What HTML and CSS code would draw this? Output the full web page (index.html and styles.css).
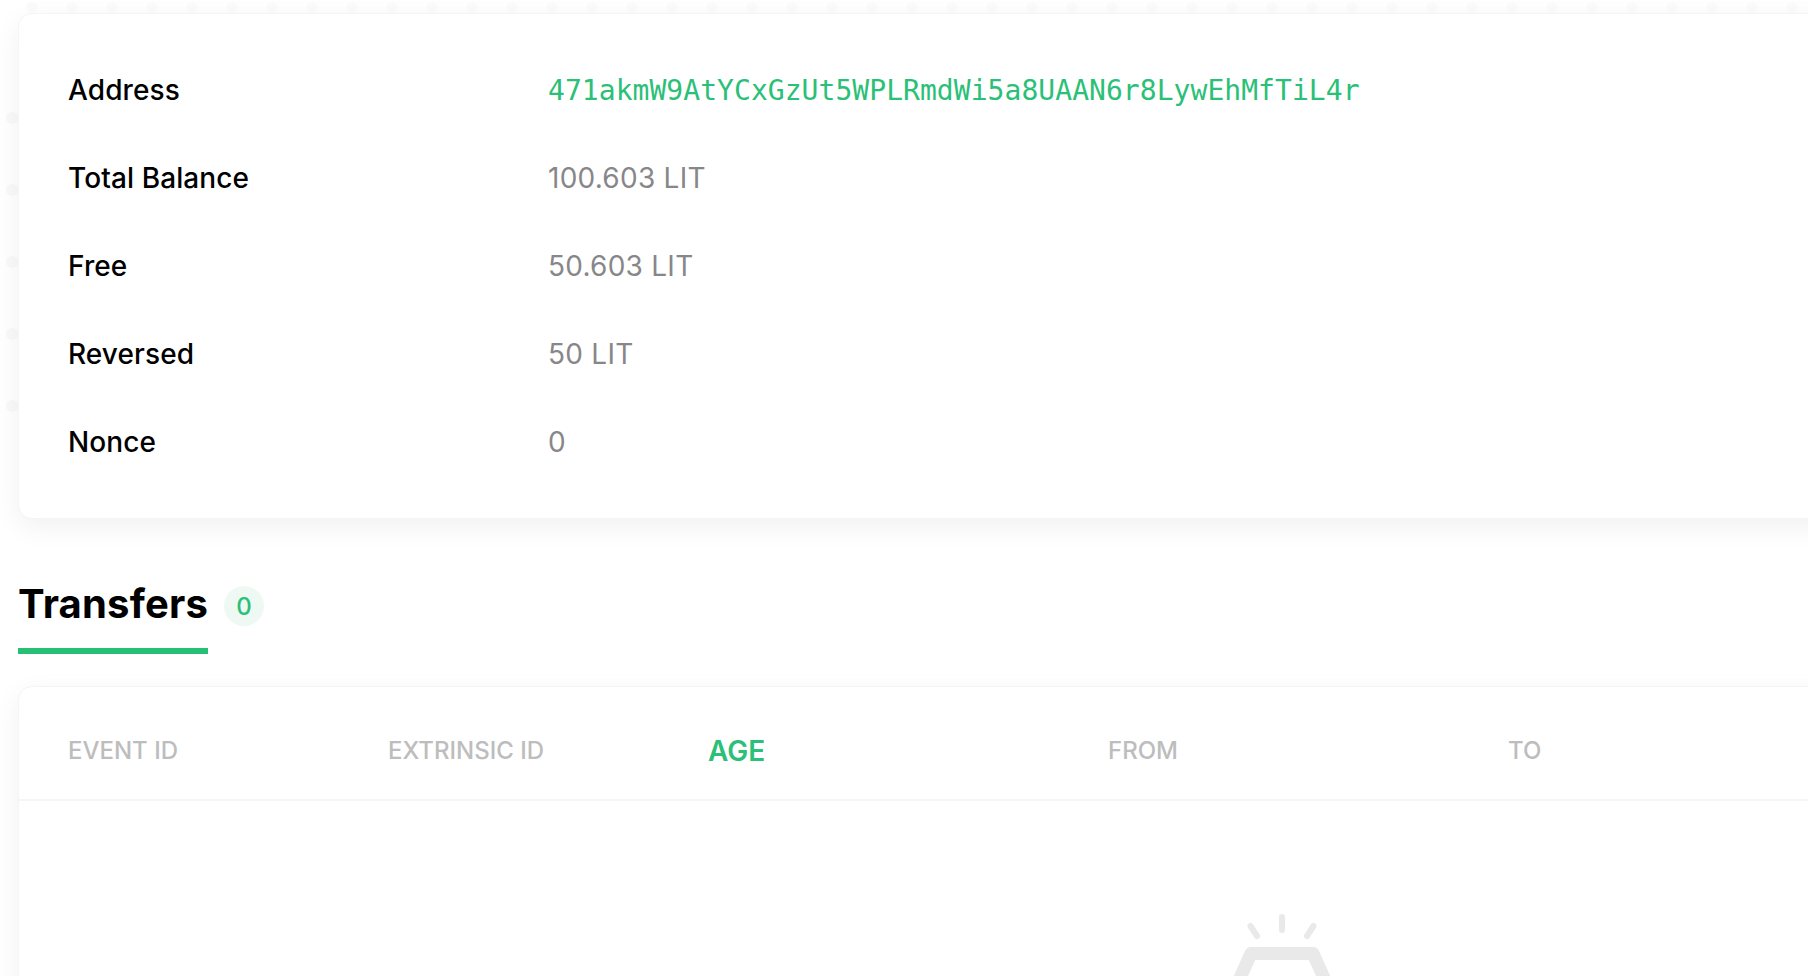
FILE: index.html
```html
<!DOCTYPE html>
<html>
<head>
    <title>Account</title>
    <link rel="stylesheet" href="styles.css">
</head>
<body>
    <div class="top-dots"></div>
    <div class="dots">
        <span></span><span></span><span></span><span></span><span></span>
    </div>

    <div class="card info-card">
        <div class="info-row">
            <div class="info-label">Address</div>
            <div class="info-value address">471akmW9AtYCxGzUt5WPLRmdWi5a8UAAN6r8LywEhMfTiL4r</div>
        </div>
        <div class="info-row">
            <div class="info-label">Total Balance</div>
            <div class="info-value">100.603 LIT</div>
        </div>
        <div class="info-row">
            <div class="info-label">Free</div>
            <div class="info-value">50.603 LIT</div>
        </div>
        <div class="info-row">
            <div class="info-label">Reversed</div>
            <div class="info-value">50 LIT</div>
        </div>
        <div class="info-row">
            <div class="info-label">Nonce</div>
            <div class="info-value">0</div>
        </div>
    </div>

    <div class="tabs">
        <div class="tab">Transfers</div>
        <span class="tab-count">0</span>
    </div>

    <div class="card table-card">
        <div class="table-head">
            <div class="col col-event">EVENT ID</div>
            <div class="col col-extrinsic">EXTRINSIC ID</div>
            <div class="col col-age">AGE</div>
            <div class="col col-from">FROM</div>
            <div class="col col-to">TO</div>
        </div>
        <div class="empty">
            <svg class="empty-icon" width="200" height="150" viewBox="0 0 200 150" fill="none">
                <path d="M100 6V19" stroke="#e9e9e9" stroke-width="6" stroke-linecap="round"/>
                <path d="M68.5 15L75 25" stroke="#e9e9e9" stroke-width="6" stroke-linecap="round"/>
                <path d="M131.5 15L125 25" stroke="#e9e9e9" stroke-width="6" stroke-linecap="round"/>
                <path d="M69 42.5H131L155.5 97V130H44.5V97Z" stroke="#e9e9e9" stroke-width="13" stroke-linejoin="round"/>
            </svg>
        </div>
    </div>
</body>
</html>
```
FILE: styles.css
```css
* {
    box-sizing: border-box;
}

html, body {
    height: 976px;
    overflow: hidden;
}

body {
    margin: 0;
    padding: 13px 0 0 18px;
    position: relative;
    width: 1808px;
    background: #fff;
    font-family: Inter, "Liberation Sans", sans-serif;
}

.top-dots {
    position: absolute;
    left: 20px;
    right: 0;
    top: 1px;
    height: 12px;
    background-image: radial-gradient(circle at center, #fbfbfb 4px, transparent 7px);
    background-size: 40px 12px;
    background-position: -8px 0;
}

.dots {
    position: absolute;
    left: 6px;
    top: 112px;
    display: flex;
    flex-direction: column;
    gap: 60px;
}

.dots span {
    display: block;
    width: 12px;
    height: 12px;
    border-radius: 50%;
    background: #f9f9f9;
}

.card {
    position: relative;
    width: 1860px;
    background: #fff;
    border: 1px solid #f5f5f5;
    border-radius: 14px;
    box-shadow: 0 8px 28px rgba(0, 0, 0, 0.06);
}

.info-card {
    height: 506px;
    padding: 32px 0 0 49px;
}

.info-row {
    display: flex;
    align-items: center;
    height: 88px;
}

.info-label {
    width: 480px;
    font-size: 28px;
    font-weight: 550;
    letter-spacing: 0.1px;
    color: #000;
}

.info-value {
    font-size: 28px;
    letter-spacing: 0.25px;
    color: #87878a;
}

.address {
    font-family: "DejaVu Sans Mono", monospace;
    font-size: 28px;
    letter-spacing: 0.05px;
    color: #2ac077;
}

.tabs {
    display: flex;
    align-items: center;
    height: 74px;
    margin-top: 61px;
}

.tab {
    height: 74px;
    font-size: 40px;
    font-weight: 700;
    line-height: 48px;
    letter-spacing: 0.2px;
    color: #000;
    border-bottom: 6px solid #26c074;
}

.tab-count {
    display: flex;
    align-items: center;
    justify-content: center;
    width: 40px;
    height: 40px;
    margin: -22px 0 0 16px;
    border-radius: 50%;
    background: #eef9f3;
    font-size: 24px;
    font-weight: 500;
    color: #2ac077;
}

.table-card {
    margin-top: 32px;
    height: 600px;
}

.table-head {
    display: flex;
    align-items: center;
    height: 114px;
    padding: 15px 0 0 49px;
    border-bottom: 2px solid #f5f5f5;
    font-size: 24px;
    font-weight: 500;
    color: #bdbdbd;
}

.col-event {
    width: 320px;
}

.col-extrinsic {
    width: 320px;
}

.col-age {
    width: 400px;
    font-size: 28px;
    font-weight: 600;
    color: #2ac077;
}

.col-from {
    width: 400px;
}

.empty {
    display: flex;
    justify-content: center;
    padding: 110px 0 0 0;
}

.empty-icon {
    margin-left: 668px;
}
```
